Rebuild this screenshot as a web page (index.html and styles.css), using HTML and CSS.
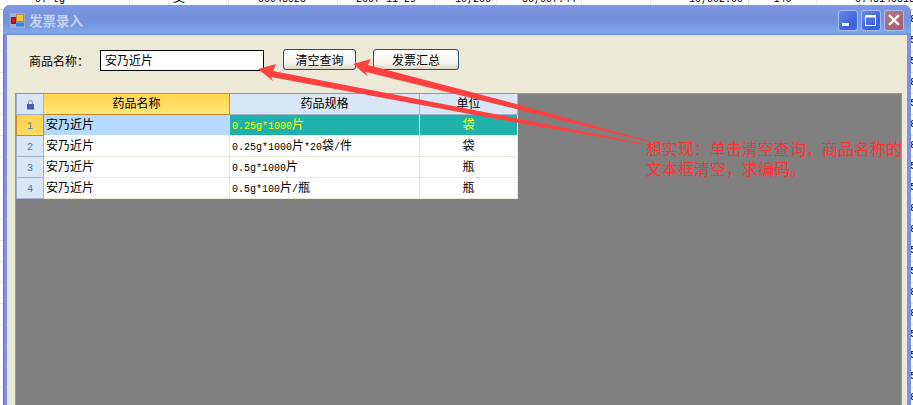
FILE: index.html
```html
<!DOCTYPE html>
<html lang="zh-CN">
<head>
<meta charset="utf-8">
<title>发票录入</title>
<link rel="stylesheet" href="styles.css">
</head>
<body>
<div class="sheet-row">
  <div class="sc c0"></div>
  <div class="sc c1"><span>0. tg</span></div>
  <div class="sc c2"><span class="cjk">支</span></div>
  <div class="sc c3"><span>00048025</span></div>
  <div class="sc c4"><span>2007-11-29</span></div>
  <div class="sc c5"><span>10,200</span></div>
  <div class="sc c6"><span>30,007.44</span></div>
  <div class="sc c7"></div>
  <div class="sc c8"><span>10,002.00</span></div>
  <div class="sc c9"><span>140</span></div>
  <div class="sc c10"><span>0.48140816</span></div>
</div>
<div class="sheet-edge">
  <div>8</div><div>5</div><div>5</div><div>8</div><div>5</div><div>8</div><div>8</div><div>5</div><div>5</div><div>8</div><div>8</div><div>5</div><div>5</div><div>8</div><div>8</div><div>5</div><div>5</div><div>5</div><div>8</div>
</div>

<section class="window">
  <header class="titlebar">
    <svg class="appicon" width="15" height="15" viewBox="0 0 15 15">
      <path d="M0.5 0.5h14v14h-14z M0.5 7.5h6 M6.5 0.5v14" fill="#b9c3d8" fill-opacity="0.6" stroke="#a4adc0"/>
      <rect x="6.5" y="1.5" width="7" height="7" fill="#f2c830" stroke="#b08a30"/>
      <rect x="1.5" y="4.5" width="4" height="6" fill="#c81818" stroke="#8a1a1a"/>
      <rect x="6" y="9.5" width="8" height="4" fill="#4080e0"/>
    </svg>
    <span class="title">发票录入</span>
    <div class="caption-buttons">
      <div class="capbtn blue">
        <svg width="20" height="20" viewBox="0 0 20 20"><rect x="4" y="13" width="7" height="3" fill="#fff"/></svg>
      </div>
      <div class="capbtn blue">
        <svg width="20" height="20" viewBox="0 0 20 20"><rect x="4.5" y="5.5" width="10" height="10" fill="none" stroke="#fff"/><rect x="4" y="5" width="11" height="2.5" fill="#fff"/></svg>
      </div>
      <div class="capbtn red">
        <svg width="20" height="20" viewBox="0 0 20 20"><path d="M5 5l10 10M15 5L5 15" stroke="#fff" stroke-width="2.4" fill="none"/></svg>
      </div>
    </div>
  </header>
  <div class="client">
    <div class="toolbar">
      <label class="field-label">商品名称：</label>
      <div class="textbox">安乃近片</div>
      <button class="btn btn-clear">清空查询</button>
      <button class="btn btn-sum">发票汇总</button>
    </div>
    <div class="gridview">
      <table class="grid">
        <colgroup><col class="col-h"><col class="col-a"><col class="col-b"><col class="col-c"></colgroup>
        <thead>
          <tr>
            <th class="rowhead corner">
              <svg width="9" height="10" viewBox="0 0 9 10"><path d="M2.5 4V2.5a2 2 0 0 1 4 0V4" fill="none" stroke="#7f93b5"/><rect x="1" y="4" width="7" height="5.5" fill="#3f62b5"/></svg>
            </th>
            <th class="head-active">药品名称</th>
            <th class="head">药品规格</th>
            <th class="head">单位</th>
          </tr>
        </thead>
        <tbody>
          <tr>
            <td class="rowhead active-num"><span class="lat">1</span></td>
            <td class="name-cell">安乃近片</td>
            <td class="teal"><span class="lat">0.25g*1000</span>片</td>
            <td class="teal center">袋</td>
          </tr>
          <tr>
            <td class="rowhead"><span class="lat">2</span></td>
            <td>安乃近片</td>
            <td><span class="lat">0.25g*1000</span>片<span class="lat">*20</span>袋<span class="lat">/</span>件</td>
            <td class="center">袋</td>
          </tr>
          <tr>
            <td class="rowhead"><span class="lat">3</span></td>
            <td>安乃近片</td>
            <td><span class="lat">0.5g*1000</span>片</td>
            <td class="center">瓶</td>
          </tr>
          <tr>
            <td class="rowhead"><span class="lat">4</span></td>
            <td>安乃近片</td>
            <td><span class="lat">0.5g*100</span>片<span class="lat">/</span>瓶</td>
            <td class="center">瓶</td>
          </tr>
        </tbody>
      </table>
    </div>
  </div>
</section>

<svg class="arrows" width="913" height="405" viewBox="0 0 913 405">
  <polygon points="353,64 371,59 368,65 510,102.3 647,140.5 647,141.5 510,107.5 366,72 367,76" fill="#ff4040"/>
  <polygon points="258,69 276,64 273,71 510,117 643,143.5 643,144.5 510,121.5 271,77 273,81" fill="#ff4040"/>
</svg>
<div class="note">想实现：单击清空查询，商品名称的<br>文本框清空，求编码。</div>
</body>
</html>
```

FILE: styles.css
```css
html, body {
  margin: 0;
  padding: 0;
  height: 405px;
  overflow: hidden;
}
body {
  position: relative;
  width: 913px;
  background-color: #fff;
  background-image: repeating-linear-gradient(to bottom, #e6e6dc 0, #e6e6dc 1px, transparent 1px, transparent 21px);
  background-position: 0 9px;
  font-family: "Noto Sans CJK SC", "Liberation Sans", sans-serif;
  font-size: 12px;
  color: #000;
}
.lat {
  font-family: "Liberation Mono", monospace;
  font-size: 10px;
  line-height: 10px;
}

/* spreadsheet behind the window */
.sheet-row {
  display: flex;
  height: 5px;
  overflow: hidden;
  background: #fff;
  font-family: "Liberation Mono", monospace;
  font-size: 10px;
  line-height: 12px;
}
.sc {
  display: flex;
  flex: none;
  align-items: flex-end;
  box-sizing: border-box;
  height: 5px;
  border-right: 1px solid #ece9d8;
  white-space: nowrap;
  overflow: hidden;
}
.sc span { margin-bottom: -1px; }
.sc .cjk {
  font-family: "Noto Sans CJK SC", sans-serif;
  font-size: 12px;
  line-height: 14px;
  margin-bottom: 1px;
}
.c0 { width: 33px; }
.c1 { width: 97px; padding-left: 2px; }
.c2 { width: 99px; justify-content: center; }
.c3 { width: 109px; padding-left: 29px; }
.c4 { width: 97px; padding-left: 18px; }
.c5 { width: 62px; justify-content: flex-end; padding-right: 5px; }
.c6 { width: 85px; justify-content: flex-end; padding-right: 5px; }
.c7 { width: 69px; }
.c8 { width: 98px; justify-content: flex-end; padding-right: 5px; }
.c9 { width: 68px; justify-content: center; }
.c10 { width: 97px; padding-left: 38px; border-right: 0; }
.sheet-edge {
  position: absolute;
  left: 910px;
  top: 9px;
  width: 3px;
  overflow: hidden;
  font-family: "Liberation Mono", monospace;
  font-size: 11px;
  line-height: 21px;
  color: #000;
}

/* window */
.window {
  position: absolute;
  left: 3px;
  top: 5px;
  width: 908px;
  height: 420px;
  border-radius: 7px 7px 0 0;
  background: linear-gradient(to right, #5d6ed4 0, #8190e6 2px, #7f90e6 4px);
  overflow: hidden;
}
.titlebar {
  display: flex;
  align-items: center;
  height: 30px;
  box-sizing: border-box;
  padding: 0 7px 0 7px;
  background: linear-gradient(to bottom, #7e98e4 0, #7591dd 40%, #7394de 60%, #80a8ec 92%, #6f88dc 100%);
}
.appicon { flex: none; }
.title {
  margin-left: 4px;
  font-size: 13.5px;
  font-weight: 700;
  color: #c3d0f0;
}
.caption-buttons {
  display: flex;
  gap: 3px;
  margin-left: auto;
}
.capbtn {
  width: 20px;
  height: 21px;
  box-sizing: border-box;
  border: 1px solid #a9bcef;
  border-radius: 3px;
}
.capbtn svg { display: block; margin: -1px; }
.capbtn.blue { background: linear-gradient(135deg, #6688e8, #3e62dc 70%, #3a6be0); }
.capbtn.red { background: linear-gradient(135deg, #b87484, #a25a70); }
.client {
  margin: 0 4px;
  height: 390px;
  box-sizing: border-box;
  background: #ece9d8;
  padding: 14px 5px 0 8px;
  overflow: hidden;
}

/* toolbar */
.toolbar {
  display: flex;
  align-items: flex-start;
  height: 44px;
  padding-left: 14px;
}
.field-label {
  width: 71px;
  line-height: 22px;
  margin-top: 1px;
}
.textbox {
  width: 164px;
  height: 21px;
  box-sizing: border-box;
  margin-top: 1px;
  border: 1px solid #000;
  background: #fff;
  padding-left: 4px;
  line-height: 18px;
}
.btn {
  height: 21px;
  box-sizing: border-box;
  border: 1px solid #1c5180;
  border-radius: 3px;
  background: linear-gradient(to bottom, #fff, #f6f5ee 70%, #dcd8c8);
  padding: 0;
  font: inherit;
  line-height: 17px;
  color: #000;
}
.btn-clear { width: 73px; margin-left: 19px; }
.btn-sum { width: 86px; margin-left: 17px; }

/* data grid */
.gridview {
  box-sizing: border-box;
  width: 887px;
  height: 320px;
  background: #808080;
  border: 1px solid #7f9db9;
}
.grid {
  border-collapse: separate;
  border-spacing: 0;
  table-layout: fixed;
  width: 502px;
  background: #fff;
}
.col-h { width: 28px; }
.col-a { width: 186px; }
.col-b { width: 190px; }
.col-c { width: 98px; }
.grid th, .grid td {
  box-sizing: border-box;
  height: 21px;
  padding: 0 0 0 2px;
  font-weight: 400;
  line-height: 18px;
  vertical-align: top;
  border-right: 1px solid #ece9d8;
  border-bottom: 1px solid #ece9d8;
  white-space: nowrap;
  overflow: hidden;
}
.grid .center { text-align: center; padding-left: 0; }
.grid th {
  text-align: center;
  padding-left: 0;
}
.grid .head {
  background: #d8e6f5;
  border-right: 1px solid #9db3cd;
  border-bottom: 1px solid #9db3cd;
}
.grid .head-active {
  background: linear-gradient(to bottom, #ffd34f, #ffe878);
  border-right: 1px solid #c68a2a;
  border-bottom: 1px solid #c68a2a;
}
.grid .rowhead {
  background: #d8e6f5;
  border-right: 1px solid #9db3cd;
  border-bottom: 1px solid #9db3cd;
  border-left: 1px solid #9db3cd;
  text-align: center;
  padding: 0;
  color: #3f7bb8;
}
.corner svg { display: block; margin: 6px auto 0; }
.grid .active-num {
  background: linear-gradient(to bottom, #ffd34f, #ffdb60);
  border-color: #c68a2a;
}
.grid .name-cell { background: #b6d9ff; border-right: 0; border-bottom-color: #fff; }
.grid .teal {
  background: #20b2aa;
  color: #ffff00;
  border-right-color: #fff;
  border-bottom-color: #fff;
}

/* screenshot annotations */
.arrows {
  position: absolute;
  left: 0;
  top: 0;
}
.note {
  position: absolute;
  left: 646px;
  top: 138px;
  font-size: 16px;
  line-height: 20px;
  color: #ff3333;
  white-space: nowrap;
}
```
